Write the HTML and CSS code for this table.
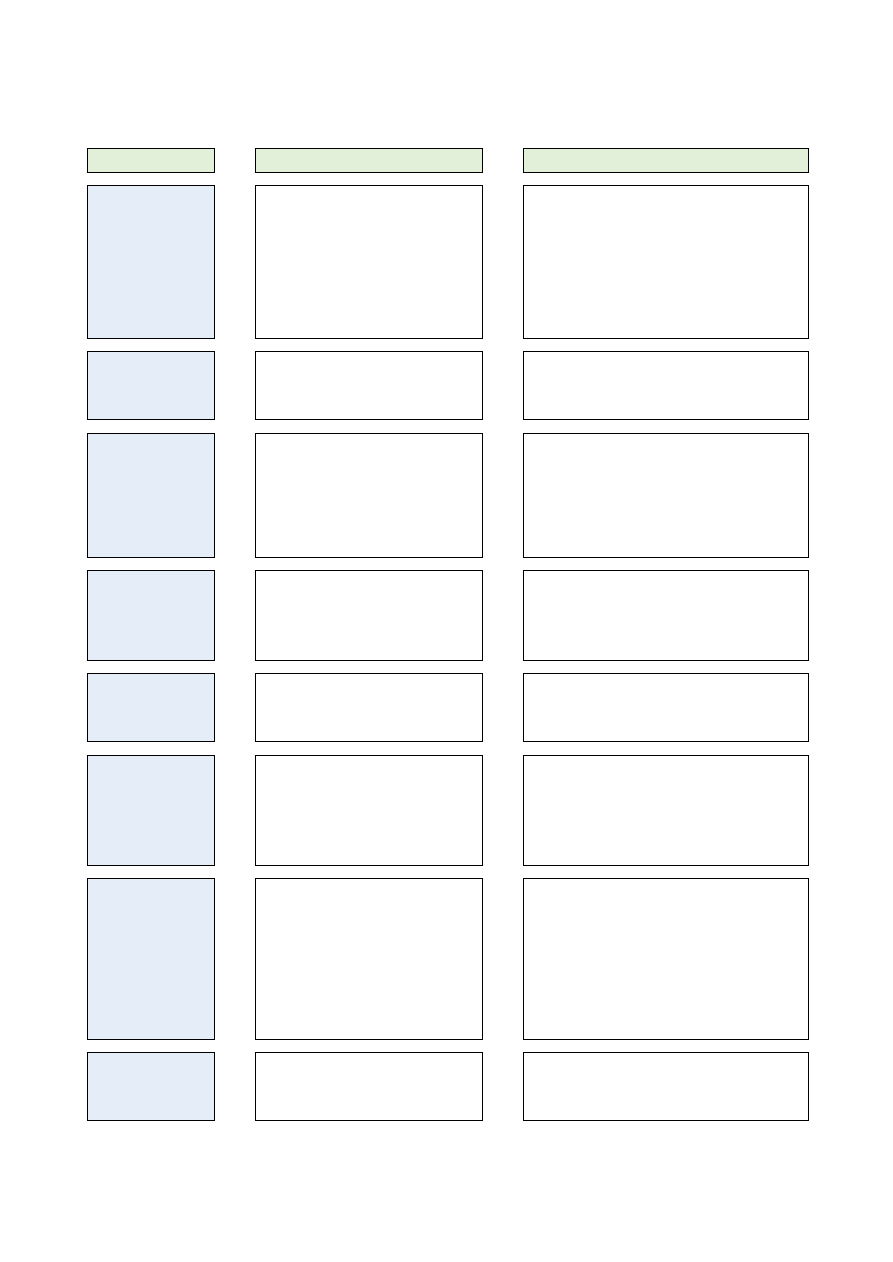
FILE: index.html
```html
<!DOCTYPE html>
<html lang="en">
<head>
<meta charset="utf-8">
<title>Table</title>
<link rel="stylesheet" href="styles.css">
</head>
<body>
<main class="page">
  <div class="table">
    <div class="cell head"></div><div class="cell head"></div><div class="cell head"></div>
    <div class="cell side"></div><div class="cell"></div><div class="cell"></div>
    <div class="cell side short"></div><div class="cell short"></div><div class="cell short"></div>
    <div class="cell side"></div><div class="cell"></div><div class="cell"></div>
    <div class="cell side"></div><div class="cell"></div><div class="cell"></div>
    <div class="cell side short"></div><div class="cell short"></div><div class="cell short"></div>
    <div class="cell side"></div><div class="cell"></div><div class="cell"></div>
    <div class="cell side"></div><div class="cell"></div><div class="cell"></div>
    <div class="cell side"></div><div class="cell"></div><div class="cell"></div>
  </div>
</main>
</body>
</html>
```

FILE: styles.css
```css
html, body {
  margin: 0;
  padding: 0;
  background: #ffffff;
  font-family: "Liberation Sans", Arial, sans-serif;
}

.page {
  width: 893px;
  height: 1262px;
  box-sizing: border-box;
  padding: 148px 0 0 87px;
}

.table {
  display: grid;
  grid-template-columns: 128px 228px 286px;
  grid-template-rows: 25px 154px 70px 125px 91px 70px 111px 162px 69px;
  column-gap: 40px;
  row-gap: 12px;
}

.cell {
  box-sizing: border-box;
  border: 1px solid #000000;
  background: #ffffff;
}

.cell.short {
  align-self: start;
  height: 69px;
}

.cell.head {
  background: #e2f0d9;
}

.cell.side {
  background: #e5edf8;
}
```
